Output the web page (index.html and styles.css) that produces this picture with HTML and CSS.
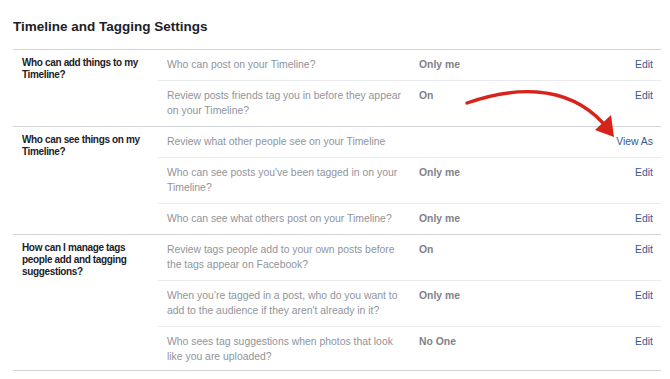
FILE: index.html
```html
<!DOCTYPE html>
<html lang="en">
<head>
  <meta charset="UTF-8">
  <title>Timeline and Tagging Settings</title>
  <link rel="stylesheet" href="styles.css">
</head>
<body>
  <div class="page">
    <h1>Timeline and Tagging Settings</h1>

    <!-- Who can add things -->
    <div class="section">
      <div class="section-label">Who can add things to my Timeline?</div>
      <div class="items">
        <div class="item">
          <div class="desc">Who can post on your Timeline?</div>
          <div class="value">Only me</div>
          <a class="action" href="#">Edit</a>
        </div>
        <div class="item">
          <div class="desc">Review posts friends tag you in before they appear on your Timeline?</div>
          <div class="value">On</div>
          <a class="action" href="#">Edit</a>
        </div>
      </div>
    </div>

    <!-- Who can see things -->
    <div class="section">
      <div class="section-label">Who can see things on my Timeline?</div>
      <div class="items">
        <div class="item">
          <div class="desc">Review what other people see on your Timeline</div>
          <div class="value"></div>
          <a class="action" href="#">View As</a>
        </div>
        <div class="item">
          <div class="desc">Who can see posts you've been tagged in on your Timeline?</div>
          <div class="value">Only me</div>
          <a class="action" href="#">Edit</a>
        </div>
        <div class="item">
          <div class="desc">Who can see what others post on your Timeline?</div>
          <div class="value">Only me</div>
          <a class="action" href="#">Edit</a>
        </div>
      </div>
    </div>

    <!-- Tags -->
    <div class="section">
      <div class="section-label">How can I manage tags people add and tagging suggestions?</div>
      <div class="items">
        <div class="item">
          <div class="desc">Review tags people add to your own posts before the tags appear on Facebook?</div>
          <div class="value">On</div>
          <a class="action" href="#">Edit</a>
        </div>
        <div class="item">
          <div class="desc">When you’re tagged in a post, who do you want to add to the audience if they aren't already in it?</div>
          <div class="value">Only me</div>
          <a class="action" href="#">Edit</a>
        </div>
        <div class="item last">
          <div class="desc">Who sees tag suggestions when photos that look like you are uploaded?</div>
          <div class="value">No One</div>
          <a class="action" href="#">Edit</a>
        </div>
      </div>
    </div>

    <!-- red annotation arrow pointing at View As -->
    <svg class="arrow" width="670" height="379" viewBox="0 0 670 379">
      <path d="M467 103 C 510 88, 565 82, 603 123" fill="none" stroke="#d8231b" stroke-width="3.4" stroke-linecap="round"/>
      <polygon points="614,137 595,130 611,115" fill="#d8231b"/>
    </svg>
  </div>
</body>
</html>
```

FILE: styles.css
```css
body {
  margin: 0;
  background: #fff;
  font-family: "Liberation Sans", Arial, sans-serif;
}

.page {
  position: relative;
  padding: 18px 9px 0 13px;
}

h1 {
  margin: 0 0 14px;
  font-size: 13.5px;
  line-height: 17px;
  font-weight: bold;
  color: #1d2129;
}

.section {
  display: flex;
  border-top: 1px solid #d3d6db;
}

.section:last-of-type {
  border-bottom: 1px solid #d3d6db;
}

.section-label {
  width: 126px;
  flex: none;
  padding: 7px 10px 0 9px;
  font-size: 10px;
  line-height: 12px;
  letter-spacing: -0.35px;
  font-weight: bold;
  color: #1d2129;
}

.items {
  flex: 1;
}

.item {
  display: grid;
  grid-template-columns: 244px 1fr auto;
  column-gap: 8px;
  padding: 7px 8px 8px 9px;
  font-size: 10.4px;
  line-height: 15px;
}

.item + .item {
  border-top: 1px solid #e9ebee;
}

.item.last {
  padding-bottom: 6px;
}

.desc {
  color: #90949c;
}

.value {
  color: #7f8389;
  font-weight: bold;
}

.action {
  color: #365899;
  text-decoration: none;
}

/* annotation over the table */
.arrow {
  position: absolute;
  left: 0;
  top: 0;
  pointer-events: none;
}
```
